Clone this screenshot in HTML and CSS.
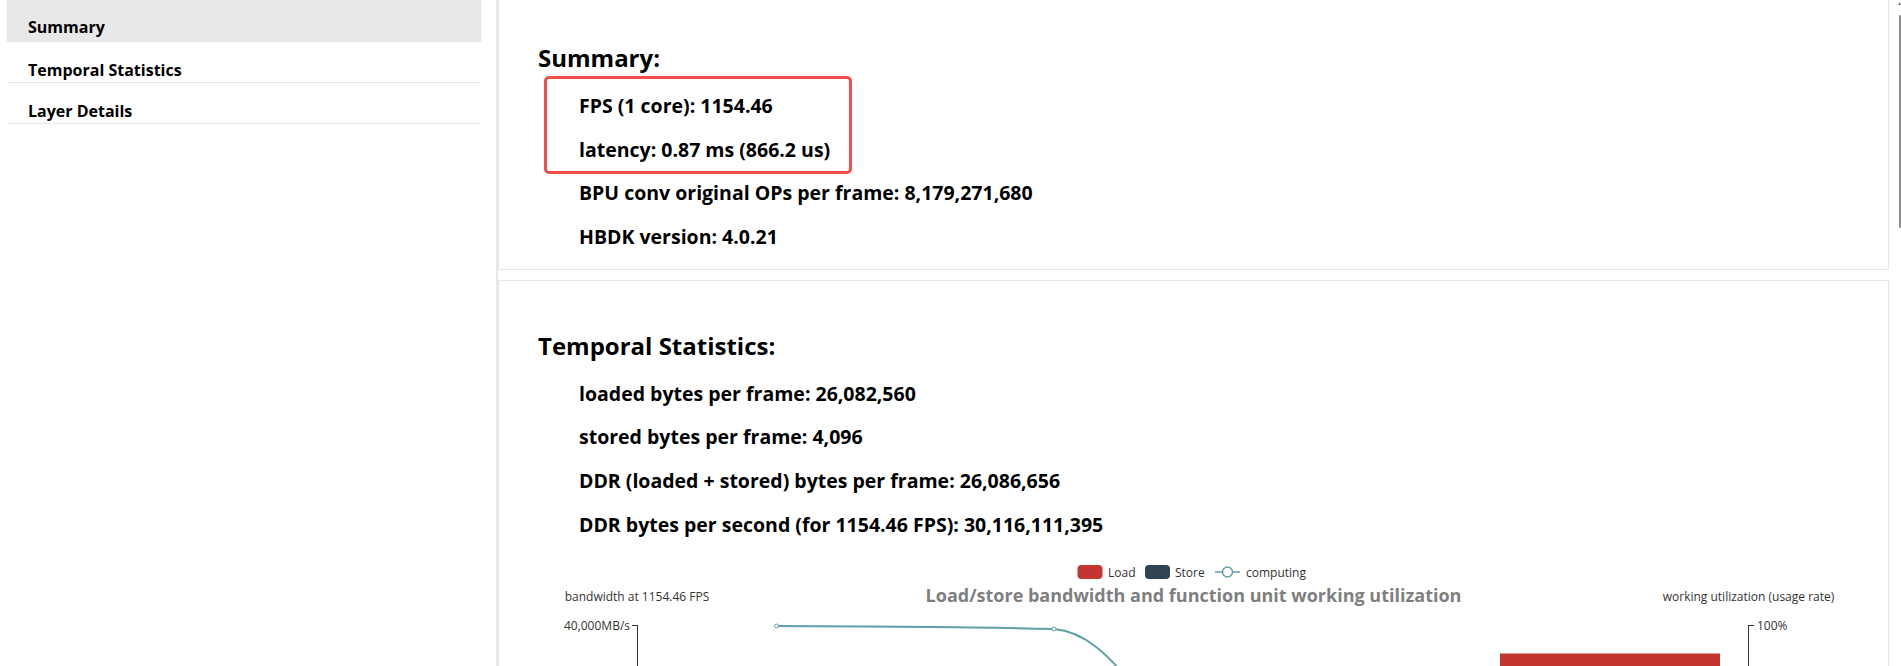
FILE: index.html
```html
<!DOCTYPE html>
<html lang="en">
<head>
<meta charset="utf-8">
<title>Performance Report</title>
<link rel="stylesheet" href="styles.css">
</head>
<body>
<div class="layout">
  <nav class="sidebar">
    <a class="nav-item active" href="#summary">Summary</a>
    <a class="nav-item" href="#temporal">Temporal Statistics</a>
    <a class="nav-item" href="#layers">Layer Details</a>
  </nav>
  <main class="content">
    <section class="card card-summary" id="summary">
      <h2 class="card-title">Summary:</h2>
      <ul class="stats">
        <li>FPS (1 core): 1154.46</li>
        <li>latency: 0.87 ms (866.2 us)</li>
        <li>BPU conv original OPs per frame: 8,179,271,680</li>
        <li>HBDK version: 4.0.21</li>
      </ul>
      <div class="highlight-box"></div>
    </section>
    <section class="card card-temporal" id="temporal">
      <h2 class="card-title">Temporal Statistics:</h2>
      <ul class="stats">
        <li>loaded bytes per frame: 26,082,560</li>
        <li>stored bytes per frame: 4,096</li>
        <li>DDR (loaded + stored) bytes per frame: 26,086,656</li>
        <li>DDR bytes per second (for 1154.46 FPS): 30,116,111,395</li>
      </ul>
      <div class="chart">
        <svg class="chart-svg" width="1389" height="400" viewBox="0 0 1389 400">
          <g class="legend">
            <rect x="578.5" y="19" width="25" height="14" rx="4" fill="#c23531"/>
            <text x="609" y="26" class="legend-text">Load</text>
            <rect x="646" y="19" width="25" height="14" rx="4" fill="#2f4554"/>
            <text x="676" y="26" class="legend-text">Store</text>
            <line x1="716" y1="26" x2="741" y2="26" stroke="#61a0a8" stroke-width="1.5"/>
            <circle cx="728.5" cy="26" r="5" fill="#fff" stroke="#61a0a8" stroke-width="1.5"/>
            <text x="747" y="26" class="legend-text">computing</text>
          </g>
          <text x="694.5" y="56" class="chart-title" text-anchor="middle">Load/store bandwidth and function unit working utilization</text>
          <text x="138" y="55" class="axis-name" text-anchor="middle">bandwidth at 1154.46 FPS</text>
          <text x="1249.5" y="55" class="axis-name" text-anchor="middle">working utilization (usage rate)</text>

          <rect x="1001" y="107.5" width="220" height="300" fill="#c23531"/>

          <line x1="138.5" y1="79" x2="138.5" y2="400" stroke="#333" stroke-width="1"/>
          <line x1="133" y1="79.5" x2="138.5" y2="79.5" stroke="#333" stroke-width="1"/>
          <text x="131" y="83.5" class="axis-label" text-anchor="end">40,000MB/s</text>

          <line x1="1249.5" y1="79" x2="1249.5" y2="400" stroke="#333" stroke-width="1"/>
          <line x1="1249.5" y1="79.5" x2="1255" y2="79.5" stroke="#333" stroke-width="1"/>
          <text x="1258" y="83.5" class="axis-label">100%</text>

          <path d="M277.5 80 C 370 80.3, 480 81, 555 83 C 585 85.5, 610 107.5, 640 147.5 C 670 190, 700 240, 740 300" fill="none" stroke="#61a0a8" stroke-width="2"/>
          <circle cx="277.5" cy="80" r="2" fill="#fff" stroke="#61a0a8" stroke-width="1"/>
          <circle cx="555" cy="83" r="2" fill="#fff" stroke="#61a0a8" stroke-width="1"/>
        </svg>
      </div>
    </section>
  </main>
</div>
<div class="scroll-arrow"></div>
<div class="scroll-thumb"></div>
</body>
</html>
```
FILE: styles.css
```css
html, body {
  margin: 0;
  padding: 0;
  height: 100%;
  overflow: hidden;
  background: #fff;
  font-family: "Open Sans", "Noto Sans", sans-serif;
  color: #000;
}

.layout {
  display: flex;
  align-items: flex-start;
  height: 100%;
}

.sidebar {
  flex: 0 0 474px;
  margin-left: 7px;
}

.nav-item {
  display: block;
  height: 41px;
  box-sizing: border-box;
  padding: 18px 0 2px 21px;
  line-height: 20px;
  font-size: 16px;
  font-weight: 700;
  color: #000;
  text-decoration: none;
  border-bottom: 1px solid #e6e6e6;
}

.nav-item.active {
  height: 42px;
  padding-top: 17px;
  background: #e8e8e8;
  border-bottom-color: #e8e8e8;
}

.content {
  flex: 1;
  margin-left: 15px;
  padding-right: 12px;
  border-left: 2px solid #e8e8e8;
  height: 100%;
  box-sizing: border-box;
}

.card {
  position: relative;
  background: #fff;
  border: 1px solid #e5e5e5;
}

.card-summary {
  border-top: none;
  padding: 43px 0 10px;
}

.card-temporal {
  margin-top: 10px;
  padding: 50px 0 0;
}

.card-title {
  margin: 0 0 0 39px;
  font-size: 24px;
  line-height: 30px;
  font-weight: 700;
}

.stats {
  list-style: none;
  margin: 11px 0 0;
  padding: 0 0 0 80px;
}

.stats li {
  font-size: 19.5px;
  font-weight: 700;
  line-height: 43.67px;
  white-space: nowrap;
}

.highlight-box {
  position: absolute;
  left: 45px;
  top: 76px;
  width: 308px;
  height: 98px;
  box-sizing: border-box;
  border: 3px solid #f24e4c;
  border-radius: 5px;
}

.chart {
  height: 400px;
}

.chart-svg {
  display: block;
  font-family: "Open Sans", "Noto Sans", sans-serif;
}

.legend-text {
  font-size: 12px;
  fill: #333;
  dominant-baseline: central;
}

.chart-title {
  font-size: 18px;
  font-weight: 700;
  fill: #7f7f7f;
}

.axis-name,
.axis-label {
  font-size: 12px;
  fill: #333;
}

.scroll-thumb {
  position: fixed;
  right: 0;
  top: 15px;
  width: 2px;
  height: 213px;
  background: #8c8c8c;
  border-radius: 1px;
}

.scroll-arrow {
  position: fixed;
  right: 0;
  top: 2px;
  width: 0;
  height: 0;
  border-left: 2px solid transparent;
  border-right: 1px solid transparent;
  border-bottom: 3px solid #777;
}
```
